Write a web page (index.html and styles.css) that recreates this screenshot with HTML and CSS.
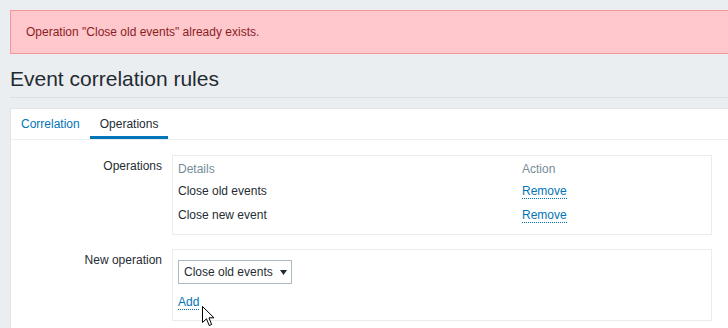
FILE: index.html
```html
<!DOCTYPE html>
<html>
<head>
<meta charset="utf-8">
<link rel="stylesheet" href="styles.css">
</head>
<body>
<div class="page">
  <div class="msg-bad">Operation "Close old events" already exists.</div>
  <h1 class="title">Event correlation rules</h1>
  <div class="panel">
    <ul class="tabs">
      <li class="tab"><a class="tab-link" href="#">Correlation</a></li>
      <li class="tab active"><a class="tab-link" href="#">Operations</a></li>
    </ul>
    <div class="form">
      <div class="form-row">
        <div class="label">Operations</div>
        <div class="box box-table">
          <table class="ops">
            <tr class="head"><td class="col-details">Details</td><td>Action</td></tr>
            <tr class="row"><td>Close old events</td><td><a class="link" href="#">Remove</a></td></tr>
            <tr class="row"><td>Close new event</td><td><a class="link" href="#">Remove</a></td></tr>
          </table>
        </div>
      </div>
      <div class="form-row">
        <div class="label">New operation</div>
        <div class="box box-new">
          <div class="select"><span>Close old events</span><svg class="caret" width="7" height="5" viewBox="0 0 7 5"><path d="M0 0H7L3.5 5Z" fill="#1f2c33"/></svg></div>
          <div class="add-line"><a class="link" href="#">Add</a></div>
          <svg class="cursor" width="13" height="21" viewBox="0 0 13 21"><path d="M0.5 0.5V16.5L4.5 12.8L7.2 19.5L9.6 18.5L7 11.8H12Z" fill="#fff" stroke="#000" stroke-width="1" stroke-linejoin="miter"/></svg>
        </div>
      </div>
    </div>
  </div>
</div>
</body>
</html>
```
FILE: styles.css
```css
html, body {
  margin: 0;
  padding: 0;
  background: #ebeef0;
  overflow: hidden;
}
body {
  font-family: "Liberation Sans", Arial, sans-serif;
  font-size: 12px;
  line-height: 14px;
  color: #1f2c33;
}
.page {
  width: 720px;
  height: 308px;
  padding: 10px;
  overflow: hidden;
}
.msg-bad {
  box-sizing: border-box;
  height: 44px;
  padding: 14px 15px;
  background: #fec8cd;
  border: 1px solid #f4969d;
  color: #8c1c23;
}
.title {
  margin: 13px 0 10px;
  padding: 0 0 6px;
  font-size: 21px;
  line-height: 24px;
  font-weight: normal;
  color: #1f2c33;
  border-bottom: 1px solid #dde1e4;
}
.panel {
  background: #fff;
  border: 1px solid #dfe4e7;
  padding-bottom: 10px;
}
.tabs {
  list-style: none;
  margin: 0;
  padding: 0;
  display: flex;
  border-bottom: 1px solid #ebeef0;
  height: 30px;
}
.tab-link {
  display: block;
  padding: 8px 10px 5px;
  line-height: 14px;
  color: #0275b8;
  text-decoration: none;
  border-bottom: 3px solid transparent;
}
.tab.active .tab-link {
  color: #1f2c33;
  border-bottom-color: #0275b8;
}
.form {
  padding-top: 15px;
  display: flex;
  flex-direction: column;
  gap: 14px;
}
.form-row {
  display: grid;
  grid-template-columns: 151px 540px;
  column-gap: 10px;
  align-items: start;
}
.label {
  text-align: right;
  padding-top: 4px;
}
.box {
  border: 1px solid #ebebeb;
  box-sizing: border-box;
}
.box-table {
  padding: 2px 5px 6px;
}
.ops {
  border-collapse: collapse;
  width: 100%;
}
.ops td {
  padding: 4px 0 6px;
  vertical-align: top;
}
.ops .head td {
  padding: 4px 0;
  color: #768d99;
}
.col-details {
  width: 344px;
}
.link {
  color: #0275b8;
  text-decoration: none;
  border-bottom: 1px dotted #0275b8;
}
.box-new {
  position: relative;
  padding: 10px 5px 11px;
}
.select {
  box-sizing: border-box;
  width: 114px;
  height: 24px;
  display: flex;
  align-items: center;
  padding: 0 4px 0 5px;
  border: 1px solid #acbbc2;
  background: #fff;
}
.caret {
  margin-left: auto;
}
.add-line {
  margin-top: 11px;
}
.cursor {
  position: absolute;
  left: 29px;
  top: 56px;
}
```
